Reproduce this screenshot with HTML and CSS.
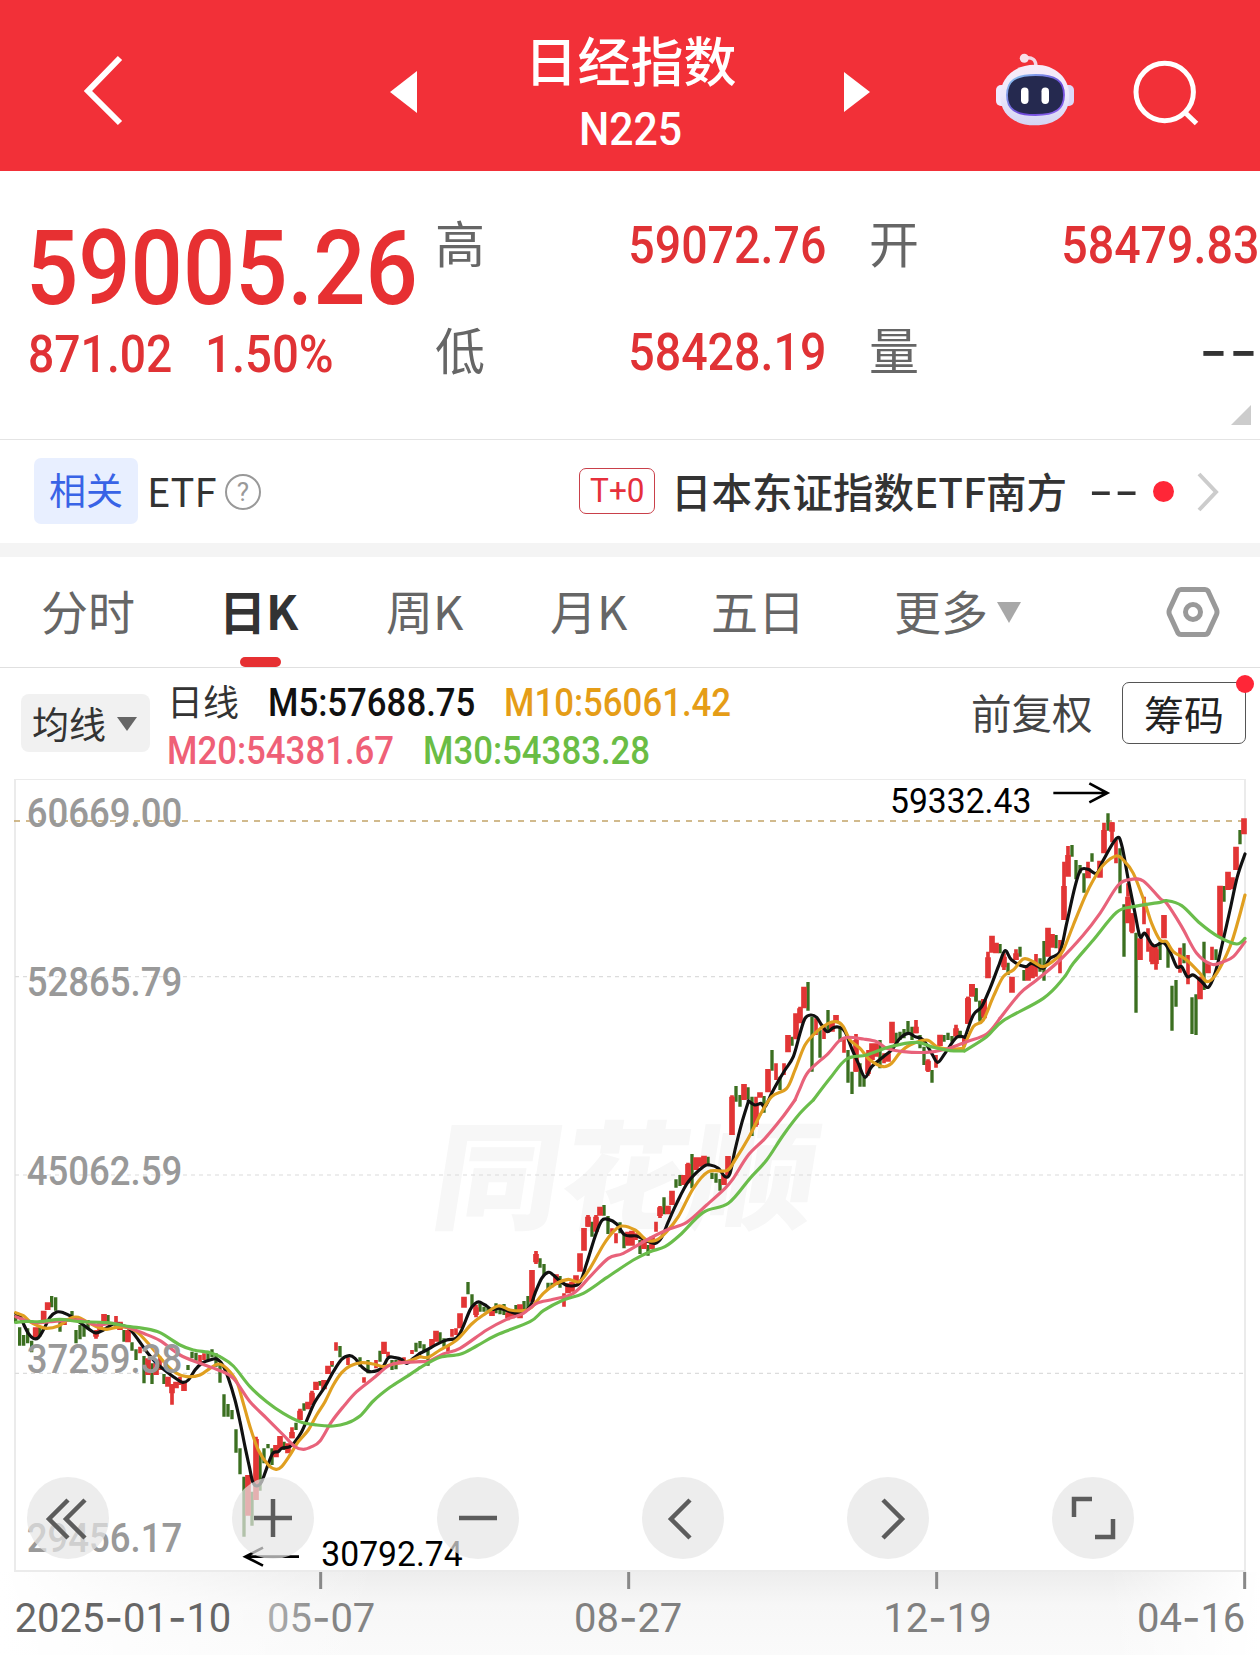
FILE: index.html
```html
<!DOCTYPE html>
<html lang="zh-CN">
<head>
  <meta charset="UTF-8" />
  <title>日经指数 N225</title>
  <link rel="stylesheet" href="styles.css">
</head>
<body>
  <header class="topbar">
    <svg class="back" width="44" height="72" viewBox="0 0 44 72"><path d="M38 4L6 37L38 69" /></svg>
    <svg width="27" height="42" viewBox="0 0 27 42"><path d="M0 21L27 0V42Z" fill="#fff" /></svg>
    <div class="title">
      <h1>日经指数</h1>
      <span class="code">N225</span>
    </div>
    <svg width="26" height="40" viewBox="0 0 26 40"><path d="M0 0L26 20L0 40Z" fill="#fff" /></svg>
    <svg class="robot" width="80" height="76" viewBox="0 0 80 76">
      <defs>
        <linearGradient id="shell" x1="0" y1="0" x2="0" y2="1">
          <stop offset="0" stop-color="#f8ecf8" />
          <stop offset=".5" stop-color="#ece8fc" />
          <stop offset="1" stop-color="#d4d4f2" />
        </linearGradient>
        <linearGradient id="rim" x1="0" y1="0" x2="1" y2="1">
          <stop offset="0" stop-color="#8fd2f4" />
          <stop offset=".6" stop-color="#6b46d8" />
          <stop offset="1" stop-color="#8f6bf0" />
        </linearGradient>
      </defs>
      <path d="M29 6Q40 4 40 15" fill="none" stroke="#f4d6e4" stroke-width="3.5" />
      <circle cx="28.300" cy="6.300" r="4.500" fill="#f8dfe8" />
      <rect x="0" y="33" width="12" height="21" rx="5" fill="#efeaff" />
      <rect x="66" y="33" width="12" height="21" rx="5" fill="#dcd8f8" />
      <path d="M39 12.700C60 12.700 73.300 26 73.300 44C73.300 62 60 73.300 39 73.300S4.300 62 4.300 44C4.300 26 18 12.700 39 12.700Z" fill="url(#shell)" />
      <path d="M39.500 23C60 23 68 29 68 43C68 57 60 63 39.500 63S11 57 11 43C11 29 19 23 39.500 23Z" fill="#25294f" stroke="url(#rim)" stroke-width="1.800" />
      <rect x="25" y="35.500" width="7.500" height="16.500" rx="3.700" fill="#fff" />
      <rect x="45.500" y="35.500" width="7.500" height="16.500" rx="3.700" fill="#fff" />
    </svg>
    <svg class="search" width="70" height="70" viewBox="0 0 70 70"><circle cx="34.700" cy="34" r="28.700" /><path d="M54.500 54L66.500 65.500" /></svg>
  </header>

  <section class="quote">
    <div class="price">
      <div class="last"><span class="num">59005.26</span></div>
      <div class="change">
        <span class="num">871.02</span>
        <span class="num">1.50%</span>
      </div>
    </div>
    <dl class="stats">
      <div><dt>高</dt><dd>59072.76</dd></div>
      <div><dt>开</dt><dd>58479.83</dd></div>
      <div><dt>低</dt><dd>58428.19</dd></div>
      <div><dt>量</dt><dd class="empty">--</dd></div>
    </dl>
    <i class="corner"></i>
  </section>

  <section class="related">
    <span class="tag">相关</span>
    <span class="etf">ETF</span>
    <span class="help">?</span>
    <span class="t0"><span>T+0</span></span>
    <span class="fund">日本东证指数ETF南方</span>
    <span class="dash">--</span>
    <i class="dot"></i>
    <svg width="24" height="40" viewBox="0 0 24 40"><path d="M3 2L20 20L3 38" fill="none" stroke="#ccc" stroke-width="4" /></svg>
  </section>

  <nav class="tabs">
    <a>分时</a>
    <a class="active">日K</a>
    <a>周K</a>
    <a>月K</a>
    <a class="five">五日</a>
    <a class="more">更多</a>
    <svg class="settings" width="54" height="52" viewBox="0 0 54 52">
      <path d="M15 3.500H39Q41 3.500 42 5L50.500 23.500Q51.500 26 50.500 28.500L42 47Q41 48.500 39 48.500H15Q13 48.500 12 47L3.500 28.500Q2.500 26 3.500 23.500L12 5Q13 3.500 15 3.500Z" />
      <circle cx="27" cy="26" r="7.500" />
    </svg>
  </nav>

  <section class="indicators">
    <button class="picker">均线</button>
    <div class="averages">
      <div class="row"><b>日线</b><span class="ma5">M5:57688.75</span><span class="ma10">M10:56061.42</span></div>
      <div class="row"><span class="ma20">M20:54381.67</span><span class="ma30">M30:54383.28</span></div>
    </div>
    <span class="adjust">前复权</span>
    <button class="chips">筹码<i class="dot"></i></button>
  </section>

  <main class="chart">
    <!-- 3 units per pixel -->
    <svg class="kline" width="1260" height="876" viewBox="0 27 3780 2628">
      <defs>
        <linearGradient id="fade" x1="0" x2="1">
          <stop offset="0" stop-color="#fff" />
          <stop offset=".3" stop-color="#fff" stop-opacity="0" />
          <stop offset=".88" stop-color="#fff" stop-opacity="0" />
          <stop offset="1" stop-color="#fff" />
        </linearGradient>
        <linearGradient id="shade" x1="0" y1="0" x2="0" y2="1">
          <stop offset="0" stop-color="#ededed" />
          <stop offset=".4" stop-color="#f7f7f7" />
          <stop offset="1" stop-color="#fafafa" />
        </linearGradient>
        <linearGradient id="dateFade" x1="0" x2="1">
          <stop offset="0" stop-color="#b0b0b0" />
          <stop offset=".6" stop-color="#848484" />
        </linearGradient>
      </defs>

      <rect x="0" y="2406" width="3780" height="249" fill="url(#shade)" />
      <rect x="0" y="2406" width="3780" height="249" fill="url(#fade)" />

      <text class="watermark" transform="translate(1284 1350) skewX(-9)" textLength="1150" lengthAdjust="spacingAndGlyphs">同花顺</text>

      <rect class="frame" x="45" y="27" width="3690" height="2376" />
      <path class="grid" d="M45 620H3735M45 1215H3735M45 1810H3735" />
      <path class="last-line" d="M42 153H3735" />

      <!-- Jan to May -->
      <g transform="translate(0 1500)">
        <path class="down" d="M47 135V160M59 172V227M71 195V227M83 175V220M95 212V247M119 172V200M155 78V112M167 82V122M180 150V185M216 123V150M228 180V220M240 165V208M252 165V200M264 150V178M324 135V160M372 180V215M396 217V242M408 238V270M432 258V340M456 280V342M492 312V342M564 285V300M576 245V265M588 248V272M624 242V270M636 238V262M648 250V290M660 280V338M672 373V440M684 402V440M696 420V448M708 478V548M720 535V613M732 620V800M756 665V767M780 550V662M792 535V580M804 522V535M816 535V585M852 515V540M888 458V480M912 400V422M960 333V347M996 273V290M1020 228V262M1080 262V290M1104 270V310M1140 242V275M1176 270V300M1188 270V298M1248 218V245" />
        <path class="up" d="M107 172V205M131 122V150M143 97V120M192 145V165M288 186V200M300 160V185M312 132V160M360 155V180M384 180V217M444 265V315M468 280V315M504 320V350M516 342V370M528 335V355M552 335V363M744 615V737M768 507V690M828 525V562M840 498V535M864 520V550M876 486V505M900 422V450M924 395V418M936 368V405M948 335V360M972 330V358M984 287V312M1152 215V252" />
        <path class="wick" d="M288 180V206M348 138V170M420 230V250M480 260V300M516 342V404M540 320V345M600 255V285M612 250V270M768 500V540M876 472V505M900 416V450M936 362V380M996 273V285M1008 217V242M1044 262V285M1092 322V338M1128 270V295M1164 245V262M1200 265V275M1212 262V275M1236 240V252" />
      </g>
      <!-- May to September -->
      <g transform="translate(1260 990)">
        <path class="down" d="M0 723V745M12 733V755M24 750V797M60 697V725M72 715V740M144 546V583M156 583V620M180 610V635M192 620V635M204 622V640M228 610V640M240 620V643M252 612V645M288 615V640M312 603V635M324 588V628M360 475V503M372 492V528M384 548V570M396 548V562M420 528V563M516 365V410M552 315V347M564 348V402M600 367V400M612 400V445M660 420V462M684 435V467M732 292V343M768 238V263M780 225V258M816 162V265M864 170V198M876 218V237M888 220V248M900 237V272" />
        <path class="up" d="M36 717V740M48 692V725M120 640V685M132 590V623M168 622V645M216 630V648M264 640V655M276 630V655M300 613V655M336 510V605M348 462V487M408 523V555M444 550V580M456 545V575M468 526V550M480 460V515M492 384V452M504 350V380M528 350V395M540 320V347M624 395V437M636 392V437M672 420V447M696 410V448M720 322V348M744 317V343M756 272V315M792 225V255M804 192V250M828 172V210M840 172V200M852 167V195M912 225V255M924 168V225" />
        <path class="wick" d="M84 735V755M96 687V710M108 685V705M168 614V652M264 635V661M348 453V492M432 580V620M504 345V380M528 345V355M576 385V400M588 400V430M648 400V420M708 365V395M720 318V354M804 188V200" />
      </g>
      <!-- September to January -->
      <g transform="translate(2100 480)">
        <path class="down" d="M108 468V515M120 495V530M144 472V507M156 500V618M192 498V548M216 360V422M240 440V480M276 320V347M324 156V242M336 260V425M360 300V383M384 240V300M420 290V335M444 360V458M456 425V492M480 400V470M492 440V470M540 330V415M588 308V340M600 305V330M612 297V325M624 273V312M636 290V330M660 315V355M672 350V405M696 420V458M732 315V335M744 308V330M756 318V335M780 303V320M828 175V215M840 212V270" />
        <path class="up" d="M96 500V615M132 462V510M168 525V585M180 487V503M204 417V487M264 315V367M288 250V328M300 235V280M312 170V235M396 275V305M408 255V280M468 330V425M504 370V432M516 340V390M528 340V380M564 370V395M576 275V340M648 290V310M684 392V422M720 314V348M768 295V318M804 205V282M816 162V200M852 207V265" />
        <path class="wick" d="M168 500V590M228 400V450M252 400V435M300 230V250M348 265V315M372 285V327M432 325V368M468 312V425M504 360V437M552 370V400M648 270V310M684 388V426M708 375V413M768 284V320M792 320V350M804 200V215M96 496V510" />
      </g>
      <!-- January to April -->
      <g transform="translate(2880 30)">
        <path class="down" d="M0 752V775M48 625V662M60 662V725M120 492V520M144 548V585M180 500V530M192 570V602M240 535V575M252 483V602M288 465V505M336 195V230M348 240V298M360 255V280M372 280V338M396 220V245M444 100V152M480 205V340M492 373V530M528 458V698M600 485V540M624 490V563M636 617V752M648 600V680M672 490V550M696 652V762M708 643V765M732 485V630M768 508V540M792 318V365M840 150V193" />
        <path class="up" d="M24 655V730M36 612V648M72 658V710M84 532V595M96 467V518M108 488V520M132 530V562M156 590V638M168 520V540M204 560V602M216 550V595M264 443V530M276 462V503M312 318V420M324 225V290M384 265V295M420 242V293M432 150V220M456 127V155M504 350V430M516 400V455M540 475V540M576 500V545M588 508V552M612 405V475M720 590V658M744 550V580M780 317V470M804 275V330M816 292V328M828 200V270M852 115V163" />
        <path class="wick" d="M12 770V790M24 650V670M84 515V540M132 520V570M168 508V540M228 522V590M300 480V580M312 245V325M324 198V240M384 245V280M432 128V170M456 127V187M468 180V250M504 310V350M516 400V460M552 350V433M564 445V515M576 490V553M588 500V569M660 503V578M684 525V613M756 500V540M300 515V560" />
      </g>

      <!-- moving averages -->
      <g class="ma m5">
        <polyline transform="translate(0 1500)" points="47,130 60,138 72,165 85,190 100,205 115,203 130,180 150,142 170,126 190,128 215,140 250,165 285,188 310,180 340,162 365,165 390,178 415,210 440,245 470,280 500,305 530,327 548,337 565,330 585,300 605,280 630,270 650,267 668,285 685,325 705,390 720,455 735,530 748,590 758,635 770,648 785,635 800,595 818,550 835,545 845,535 870,530 885,515 905,485 925,440 945,395 975,350 1000,305 1025,268 1048,257 1065,265 1085,290 1110,305 1145,295 1165,263 1185,263 1205,268 1220,280 1240,265 1260,250" />
        <polyline transform="translate(1260 990)" points="0,760 20,750 50,733 80,720 108,715 125,690 150,630 165,611 178,606 200,618 215,628 240,625 270,635 300,640 330,620 345,580 365,535 385,517 400,525 420,543 445,557 478,550 500,490 525,410 545,362 565,358 590,372 615,405 650,408 680,422 705,430 725,412 745,365 770,310 805,245 850,200 870,195 895,205 915,230 930,220 945,150 965,70 985,5" />
        <polyline transform="translate(2100 480)" points="145,512 165,525 183,520 195,530 215,490 235,453 255,420 280,380 300,310 315,265 332,255 350,262 365,285 382,305 400,293 418,292 435,305 455,355 475,400 495,442 515,410 550,380 575,360 600,325 625,310 645,320 670,330 695,370 713,397 735,370 770,322 797,322" />
        <polyline transform="translate(2880 30)" points="15,772 40,705 65,680 90,625 115,560 135,512 155,540 195,560 215,550 250,565 270,535 300,515 320,430 345,320 362,270 385,268 410,280 430,240 470,175 485,195 505,300 525,400 540,470 555,460 580,497 610,488 630,515 650,560 665,560 682,590 700,585 725,605 745,622 765,580 785,500 810,390 832,290 855,222" />
      </g>
      <g class="ma m10">
        <polyline transform="translate(0 1500)" points="47,128 70,137 90,155 115,168 140,175 175,168 210,145 235,142 260,155 290,170 320,178 350,172 380,172 410,185 440,215 470,250 500,285 530,310 560,320 600,315 630,295 655,282 680,295 710,335 730,400 750,470 775,540 805,585 828,598 845,590 870,555 895,515 925,480 950,435 975,395 1000,345 1025,308 1050,288 1085,278 1120,282 1150,290 1180,282 1220,275 1260,260" />
        <polyline transform="translate(1260 990)" points="0,770 25,772 60,750 110,720 155,672 190,645 235,618 270,630 310,632 335,622 370,580 410,550 445,538 478,545 510,505 550,435 580,395 605,378 645,390 680,420 710,420 740,395 775,350 820,265 865,215 920,212 945,180 985,115 1020,45" />
        <polyline transform="translate(2100 480)" points="180,555 215,500 260,475 285,420 315,345 350,305 385,280 410,275 430,290 450,330 480,355 510,390 550,410 575,400 600,368 630,345 680,330 710,350 750,357 790,355" />
        <polyline transform="translate(2880 30)" points="10,805 40,740 70,720 100,650 130,590 160,570 190,537 220,545 250,560 290,535 310,510 340,435 375,350 400,300 430,255 468,228 490,240 520,280 555,370 575,430 600,480 620,485 640,515 680,540 720,580 742,605 770,580 810,500 835,420 855,345" />
      </g>
      <g class="ma m20">
        <polyline transform="translate(0 1500)" points="47,140 80,152 110,158 150,155 190,152 240,150 290,165 340,160 390,175 430,190 480,212 540,255 600,280 655,300 700,325 750,395 800,445 850,495 885,530 910,538 935,530 960,513 995,455 1030,410 1070,365 1120,325 1165,288 1200,278 1260,275" />
        <polyline transform="translate(1260 990)" points="0,785 30,782 70,762 120,745 200,690 260,658 310,640 350,610 400,598 460,580 510,530 565,475 610,460 680,420 740,390 800,367 860,315 915,265 940,235 985,165 1035,115 1085,55 1125,0" />
        <polyline transform="translate(2100 480)" points="285,510 300,475 325,425 385,370 415,335 440,322 490,327 530,335 560,355 610,365 680,367 740,357 800,335 860,312 900,265" />
        <polyline transform="translate(2880 30)" points="120,715 180,640 230,600 300,540 370,465 420,400 475,315 515,298 550,303 600,355 620,370 665,440 710,520 755,553 790,545 820,530 855,485" />
      </g>
      <g class="ma m30">
        <polyline transform="translate(0 1500)" points="47,157 80,154 120,155 180,148 240,155 320,158 390,170 430,175 480,188 540,225 580,240 630,248 660,260 700,288 750,350 800,395 850,430 900,455 950,465 1000,468 1040,460 1080,438 1120,393 1170,352 1220,320 1260,293" />
        <polyline transform="translate(1260 990)" points="0,803 60,772 120,763 170,738 230,705 330,665 370,632 430,600 490,580 560,533 640,480 690,455 735,440 780,405 850,337 925,310 990,235 1040,180 1090,105 1140,40 1180,0" />
        <polyline transform="translate(2100 480)" points="340,510 390,445 440,387 500,375 570,350 650,337 700,352 750,362 793,363" />
        <polyline transform="translate(2880 30)" points="13,813 80,770 130,722 250,655 310,595 340,550 400,480 470,397 520,380 600,367 620,362 665,377 720,430 775,470 830,492 855,475" />
      </g>

      <g class="scale">
        <text x="80" y="171" textLength="467" lengthAdjust="spacingAndGlyphs">60669.00</text>
        <text x="80" y="678" textLength="467" lengthAdjust="spacingAndGlyphs">52865.79</text>
        <text x="80" y="1244" textLength="467" lengthAdjust="spacingAndGlyphs">45062.59</text>
        <text x="80" y="1808" textLength="467" lengthAdjust="spacingAndGlyphs">37259.38</text>
        <text x="80" y="2346" textLength="467" lengthAdjust="spacingAndGlyphs">29456.17</text>
      </g>

      <g class="peak">
        <text x="2670" y="129" textLength="424" lengthAdjust="spacingAndGlyphs">59332.43</text>
        <path d="M3160 69H3320M3268 40L3322 69L3268 97" />
        <text x="964" y="2388" textLength="424" lengthAdjust="spacingAndGlyphs">30792.74</text>
        <path d="M897 2360H738M789 2333L736 2360L789 2387" />
      </g>

      <path class="ticks" d="M962 2406V2457M1886 2406V2457M2810 2406V2457M3734 2406V2457" />
      <g class="dates">
        <text class="first" x="44" y="2585" textLength="650" lengthAdjust="spacingAndGlyphs">2025<tspan>-</tspan>01<tspan>-</tspan>10</text>
        <text class="faded" x="801" y="2585" textLength="325" lengthAdjust="spacingAndGlyphs">05<tspan>-</tspan>07</text>
        <text x="1722" y="2585" textLength="325" lengthAdjust="spacingAndGlyphs">08<tspan>-</tspan>27</text>
        <text x="2650" y="2585" textLength="325" lengthAdjust="spacingAndGlyphs">12<tspan>-</tspan>19</text>
        <text x="3411" y="2585" textLength="325" lengthAdjust="spacingAndGlyphs">04<tspan>-</tspan>16</text>
      </g>
    </svg>

    <div class="controls">
      <button><svg viewBox="0 0 82 82"><path d="M41 23L22 42L41 61M58 23L39 42L58 61" /></svg></button>
      <button><svg viewBox="0 0 82 82"><path d="M41 22V60M22 41H60" /></svg></button>
      <button><svg viewBox="0 0 82 82"><path d="M22 41H60" /></svg></button>
      <button><svg viewBox="0 0 82 82"><path d="M48 23L29 42L48 61" /></svg></button>
      <button><svg viewBox="0 0 82 82"><path d="M36 23L55 42L36 61" /></svg></button>
      <button><svg viewBox="0 0 82 82"><path d="M22 40V22H40M61 42V60H43" /></svg></button>
    </div>
  </main>

  <script>
    // round off the average lines
    document.querySelectorAll(".ma polyline").forEach(line => {
      const pts = line.getAttribute("points").split(" ").map(p => p.split(",").map(Number));
      const last = pts.length - 1;
      let d = `M${pts[0]}`;
      for (let i = 0; i < last; i++) {
        const a = pts[Math.max(i - 1, 0)];
        const b = pts[i];
        const c = pts[i + 1];
        const e = pts[Math.min(i + 2, last)];
        d += `C${b[0] + (c[0] - a[0]) / 6},${b[1] + (c[1] - a[1]) / 6}`;
        d += ` ${c[0] - (e[0] - b[0]) / 6},${c[1] - (e[1] - b[1]) / 6} ${c}`;
      }
      const path = document.createElementNS("http://www.w3.org/2000/svg", "path");
      path.setAttribute("d", d);
      path.setAttribute("transform", line.getAttribute("transform"));
      line.replaceWith(path);
    });
  </script>
</body>
</html>
```

FILE: styles.css
```css
* {
  box-sizing: border-box;
}
body {
  margin: 0;
  width: 1260px;
  height: 1655px;
  overflow: hidden;
  background: #fff;
  color: #333;
  font-family: Roboto, "Noto Sans CJK SC", sans-serif;
}

h1, dl, dd {
  margin: 0;
}

button {
  border: 0;
  padding: 0;
  font-family: inherit;
  color: inherit;
}

.dot {
  width: 21px;
  height: 21px;
  border-radius: 50%;
  background: #ff2637;
}

/* Header */
.topbar {
  display: grid;
  grid-template-columns: 390px 27px 427px 26px 206px 184px;
  align-items: center;
  height: 171px;
  padding-top: 12px;
  background: #f23038;
}

.back {
  margin-left: 82px;
  fill: none;
  stroke: #fff;
  stroke-width: 6;
  margin-top: -4px;
}

.title {
  display: flex;
  flex-direction: column;
  align-items: center;
  margin-top: -1px;
}

.title h1 {
  font-family: "Noto Sans CJK SC", sans-serif;
  font-size: 53px;
  font-weight: 500;
  line-height: 75px;
  color: #fff;
}

.code {
  font-size: 46px;
  font-weight: 500;
  line-height: 64px;
  color: #fff;
  transform: scaleX(.93);
}

.robot {
  justify-self: end;
  margin-top: -3px;
}

.search {
  margin-left: 54px;
  margin-top: 2px;
  fill: none;
  stroke: #fff;
  stroke-width: 5;
}

/* Quote */
.quote {
  position: relative;
  display: flex;
  height: 269px;
  border-bottom: 1px solid #e4e4e4;
  color: #e03235;
}

.price {
  width: 435px;
  padding: 43px 0 0 28px;
}

.num {
  display: inline-block;
  transform: scaleX(.89);
  transform-origin: left;
}

.last {
  height: 111px;
  margin-left: -2px;
  line-height: 110px;
  font-size: 104px;
  font-weight: 500;
  color: #e73032;
}

.last .num {
  transform: scaleX(.885);
}

.change {
  display: flex;
  font-size: 52px;
  font-weight: 500;
  line-height: 60px;
}

.change .num {
  width: 177px;
}

.change .num + .num {
  transform: scaleX(.91);
}

.stats {
  display: grid;
  grid-template-columns: 391px 390px;
  grid-auto-rows: 107px;
  column-gap: 43px;
  padding-top: 21px;
}

.stats div {
  display: flex;
  justify-content: space-between;
  line-height: 107px;
}

dt {
  font-size: 50px;
  color: #666;
  font-family: "Noto Sans CJK SC", sans-serif;
  margin-top: -4px;
}

dd {
  font-size: 52px;
  font-weight: 500;
  transform: scaleX(.895);
  transform-origin: right;
}

dd.empty {
  margin-top: -2px;
  font-family: Inter, sans-serif;
  color: #333;
  transform: scaleX(1.2);
  letter-spacing: 1px;
}

.corner {
  position: absolute;
  right: 9px;
  bottom: 14px;
  width: 20px;
  height: 20px;
  background: #ccc;
  clip-path: polygon(100% 0, 100% 100%, 0 100%);
}

/* Related ETF */
.related {
  display: flex;
  align-items: center;
  height: 117px;
  padding: 0 40px 0 34px;
  border-bottom: 14px solid #f4f4f4;
  font-family: "Noto Sans CJK SC", sans-serif;
}

.related > * {
  flex: none;
}

.tag {
  width: 104px;
  height: 66px;
  margin-top: -2px;
  border-radius: 7px;
  background: #e8efff;
  color: #3863e6;
  font-size: 37px;
  line-height: 63px;
  text-align: center;
}

.etf {
  margin: -3px 0 0 9px;
  font-size: 40px;
  width: 69px;
}

.help {
  width: 36px;
  height: 36px;
  margin-left: 9px;
  border: 2px solid #999;
  border-radius: 50%;
  color: #999;
  font: 26px/33px Roboto, sans-serif;
  text-align: center;
}

.t0 {
  width: 76px;
  height: 46px;
  margin: -1px 0 0 318px;
  border: 1.5px solid #c9404a;
  border-radius: 7px;
  color: #e6303c;
  font: 34px/43px Roboto, sans-serif;
  text-align: center;
}

.t0 span {
  display: inline-block;
  transform: scaleX(.93);
}

.fund {
  width: 398px;
  margin: -3px 0 0 16px;
  font-size: 40.5px;
  font-weight: 500;
  white-space: nowrap;
}

.dash {
  width: 50px;
  margin: -2px 0 0 19px;
  font: 44px/60px Inter, sans-serif;
  transform: scaleX(1.27);
  transform-origin: left;
}

.related .dot {
  margin: 0 22px 0 15px;
}

/* Period tabs */
.tabs {
  display: flex;
  height: 111px;
  padding-left: 41px;
  border-bottom: 1px solid #e0e0e0;
  font-family: "Noto Sans CJK SC", sans-serif;
  font-size: 47px;
  line-height: 106px;
  color: #666;
}

.tabs a {
  position: relative;
  width: 164px;
  white-space: nowrap;
}

.tabs a:first-child {
  width: 178px;
}

.tabs .active {
  width: 167px;
  font-weight: 700;
  color: #333;
}

.active::after {
  content: "";
  position: absolute;
  left: 21px;
  bottom: 0;
  width: 41px;
  height: 10px;
  border-radius: 5px;
  background: #e63032;
}

.tabs .five {
  margin-left: -3px;
}

.tabs .more {
  width: 294px;
  margin-left: 19px;
}

.more::after {
  content: "";
  display: inline-block;
  width: 24px;
  height: 21px;
  margin: 0 0 7px 9px;
  background: #a8a8a8;
  clip-path: polygon(0 0, 100% 0, 50% 100%);
}

.settings {
  margin: 29px 0 0 -22px;
  fill: none;
  stroke: #999;
  stroke-width: 5;
}

/* Indicators */
.indicators {
  display: flex;
  align-items: flex-start;
  height: 111px;
  padding: 0 14px 0 21px;
}

.picker {
  width: 129px;
  height: 58px;
  margin-top: 26px;
  border-radius: 8px;
  background: #f1f1f1;
  color: #333;
  font: 37px/54px "Noto Sans CJK SC", sans-serif;
}

.picker::after {
  content: "";
  display: inline-block;
  width: 20px;
  height: 14px;
  margin: 0 2px 8px 11px;
  background: #666;
  clip-path: polygon(0 0, 100% 0, 50% 100%);
}

.averages {
  width: 802px;
  padding: 11px 0 0 17px;
}

.row {
  display: flex;
  height: 48px;
  line-height: 48px;
  font-size: 38px;
  font-weight: 500;
}

.row b {
  width: 101px;
  font: 36px/43px "Noto Sans CJK SC", sans-serif;
}

.row span {
  width: 256px;
  transform: scaleX(.915);
  transform-origin: left;
}

.row .ma5 {
  width: 236px;
}

.ma5 { color: #111; }
.ma10 { color: #e59d17; }
.ma20 { color: #ef6077; }
.ma30 { color: #6abd45; }

.adjust {
  width: 151px;
  margin-left: 19px;
  font: 40.5px/88px "Noto Sans CJK SC", sans-serif;
  color: #444;
  white-space: nowrap;
}

.chips {
  position: relative;
  width: 124px;
  height: 62px;
  margin-top: 14px;
  border: 1.5px solid #555;
  border-radius: 7px;
  background: #fff;
  color: #222;
  font: 40px/55px "Noto Sans CJK SC", sans-serif;
}

.chips .dot {
  position: absolute;
  top: -8px;
  right: -9px;
  width: 18px;
  height: 18px;
}

/* Chart */
.chart {
  position: relative;
  height: 876px;
}

.kline {
  display: block;
}

.kline path, .kline polyline {
  fill: none;
}

.frame {
  fill: none;
  stroke: #ebebeb;
  stroke-width: 6;
}

.grid {
  stroke: #dcdcdc;
  stroke-width: 3.5;
  stroke-dasharray: 12 12;
}

.last-line {
  stroke: #c2a468;
  stroke-width: 5;
  stroke-dasharray: 18 18;
}

.watermark {
  font: 900 352px "Noto Sans CJK SC", sans-serif;
  fill: #f7f7f7;
}

.down {
  stroke: #3b6f20;
  stroke-width: 10;
}

.up {
  stroke: #e23535;
  stroke-width: 17;
}

.wick {
  stroke: #e23535;
  stroke-width: 11;
}

.ma {
  stroke-width: 9.5;
  stroke-linejoin: round;
  stroke-linecap: round;
}

.m5 { stroke: #111; }
.m10 { stroke: #e09f20; }
.m20 { stroke: #e8627a; }
.m30 { stroke: #6abd4b; }

.scale {
  font-size: 121px;
  font-weight: 500;
  fill: #999;
}

.peak {
  font-size: 104px;
  fill: #000;
}

.peak path {
  stroke: #000;
  stroke-width: 8;
}

.ticks {
  stroke: #888;
  stroke-width: 9;
}

.dates {
  font-size: 121px;
  font-weight: 450;
  fill: #808080;
}

.dates tspan {
  font-family: Inter, sans-serif;
}

.dates .first {
  fill: #666;
}

.dates .faded {
  fill: url(#dateFade);
}

.controls {
  position: absolute;
  left: 27px;
  top: 698px;
  display: flex;
  gap: 123px;
}

.controls button {
  width: 82px;
  height: 82px;
  border-radius: 50%;
  background: rgba(230, 230, 230, .7);
}

.controls svg {
  display: block;
  fill: none;
  stroke: #5c5c5c;
  stroke-width: 4.5;
}
```
